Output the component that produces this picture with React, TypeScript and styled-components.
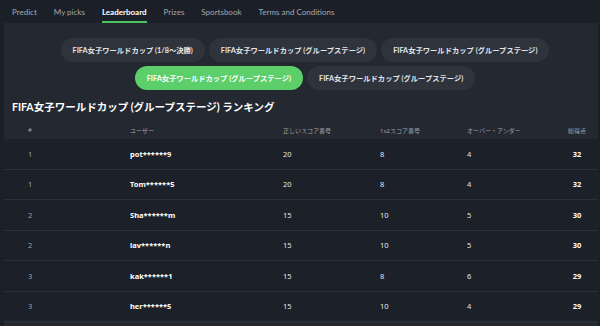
import styled, { createGlobalStyle } from "styled-components";

const GlobalStyle = createGlobalStyle`
  html, body {
    margin: 0;
    background: #1b1f27;
    font-family: "Lato", "Noto Sans CJK JP", sans-serif;
    color: #ffffff;
    -webkit-font-smoothing: antialiased;
  }
  * { box-sizing: border-box; }
`;

const tabs = ["Predict", "My picks", "Leaderboard", "Prizes", "Sportsbook", "Terms and Conditions"];

const chipRows = [
  [
    { label: "FIFA女子ワールドカップ (1/8〜決勝)", active: false },
    { label: "FIFA女子ワールドカップ (グループステージ)", active: false },
    { label: "FIFA女子ワールドカップ (グループステージ)", active: false },
  ],
  [
    { label: "FIFA女子ワールドカップ (グループステージ)", active: true },
    { label: "FIFA女子ワールドカップ (グループステージ)", active: false },
  ],
];

const rows = [
  { rank: 1, user: "pot******9", exact: 20, x12: 8, ou: 4, total: 32 },
  { rank: 1, user: "Tom******5", exact: 20, x12: 8, ou: 4, total: 32 },
  { rank: 2, user: "Sha******m", exact: 15, x12: 10, ou: 5, total: 30 },
  { rank: 2, user: "lav******n", exact: 15, x12: 10, ou: 5, total: 30 },
  { rank: 3, user: "kak******1", exact: 15, x12: 8, ou: 6, total: 29 },
  { rank: 3, user: "her******5", exact: 15, x12: 10, ou: 4, total: 29 },
];

/* -------- Nav -------- */
const Nav = styled.nav`
  display: flex;
  align-items: stretch;
  gap: 17px;
  height: 23px;
  padding-left: 12px;
`;

const Tab = styled.div<{ $active?: boolean }>`
  display: flex;
  align-items: center;
  font-size: 8px;
  font-weight: ${(p) => (p.$active ? 700 : 400)};
  color: ${(p) => (p.$active ? "#ffffff" : "#a3a8b0")};
  border-bottom: 2px solid ${(p) => (p.$active ? "#4cc35e" : "transparent")};
  padding-top: 2px;
`;

/* -------- Panel -------- */
const Panel = styled.main`
  margin: 0 2px 0 4px;
  background: #232831;
  padding-top: 15px;
  min-height: 303px;
`;

const ChipGroup = styled.div`
  display: flex;
  flex-direction: column;
  gap: 4px;
  padding-left: 8px;
`;

const ChipRow = styled.div`
  display: flex;
  justify-content: center;
  gap: 4px;
`;

const Chip = styled.button<{ $active?: boolean }>`
  height: 24px;
  padding: 0 12px;
  border: none;
  border-radius: 12px;
  font-family: inherit;
  font-size: 7.3px;
  font-weight: 700;
  color: ${(p) => (p.$active ? "#ffffff" : "#e2e4e8")};
  background: ${(p) => (p.$active ? "#5ccf6b" : "#2e333c")};
  white-space: nowrap;
`;

const Title = styled.h1`
  margin: 10px 0 7px 8px;
  font-size: 10.5px;
  line-height: 14px;
  font-weight: 700;
  color: #ffffff;
`;

/* -------- Table -------- */
const Row = styled.div<{ $head?: boolean }>`
  display: grid;
  grid-template-columns: 102px 153px 97px 87px 1fr 34px;
  align-items: center;
  padding: 0 4px 0 24px;
  height: ${(p) => (p.$head ? "18px" : "30.5px")};
  background: ${(p) => (p.$head ? "#232831" : "#1c2029")};
  border-bottom: ${(p) => (p.$head ? "none" : "1px solid #2b303a")};
  font-family: "Noto Sans", "Noto Sans CJK JP", sans-serif;
  font-size: ${(p) => (p.$head ? "6px" : "7.5px")};
  color: ${(p) => (p.$head ? "#9da2aa" : "#e4e6ea")};
`;

const Cell = styled.div<{ $center?: boolean; $strong?: boolean; $muted?: boolean }>`
  text-align: ${(p) => (p.$center ? "center" : "left")};
  font-weight: ${(p) => (p.$strong ? 700 : 400)};
  color: ${(p) => (p.$muted ? "#9da2aa" : p.$strong ? "#ffffff" : "inherit")};
  white-space: nowrap;
`;

export default function App() {
  return (
    <>
      <GlobalStyle />
      <Nav>
        {tabs.map((t) => (
          <Tab key={t} $active={t === "Leaderboard"}>
            {t}
          </Tab>
        ))}
      </Nav>
      <Panel>
        <ChipGroup>
          {chipRows.map((r, i) => (
            <ChipRow key={i}>
              {r.map((c, j) => (
                <Chip key={j} $active={c.active}>
                  {c.label}
                </Chip>
              ))}
            </ChipRow>
          ))}
        </ChipGroup>
        <Title>FIFA女子ワールドカップ (グループステージ) ランキング</Title>
        <Row $head>
          <Cell>#</Cell>
          <Cell>ユーザー</Cell>
          <Cell>正しいスコア番号</Cell>
          <Cell>1x2スコア番号</Cell>
          <Cell>オーバー・アンダー</Cell>
          <Cell $center>総得点</Cell>
        </Row>
        {rows.map((r) => (
          <Row key={r.user}>
            <Cell $muted>{r.rank}</Cell>
            <Cell $strong>{r.user}</Cell>
            <Cell>{r.exact}</Cell>
            <Cell>{r.x12}</Cell>
            <Cell>{r.ou}</Cell>
            <Cell $center $strong>
              {r.total}
            </Cell>
          </Row>
        ))}
      </Panel>
    </>
  );
}
